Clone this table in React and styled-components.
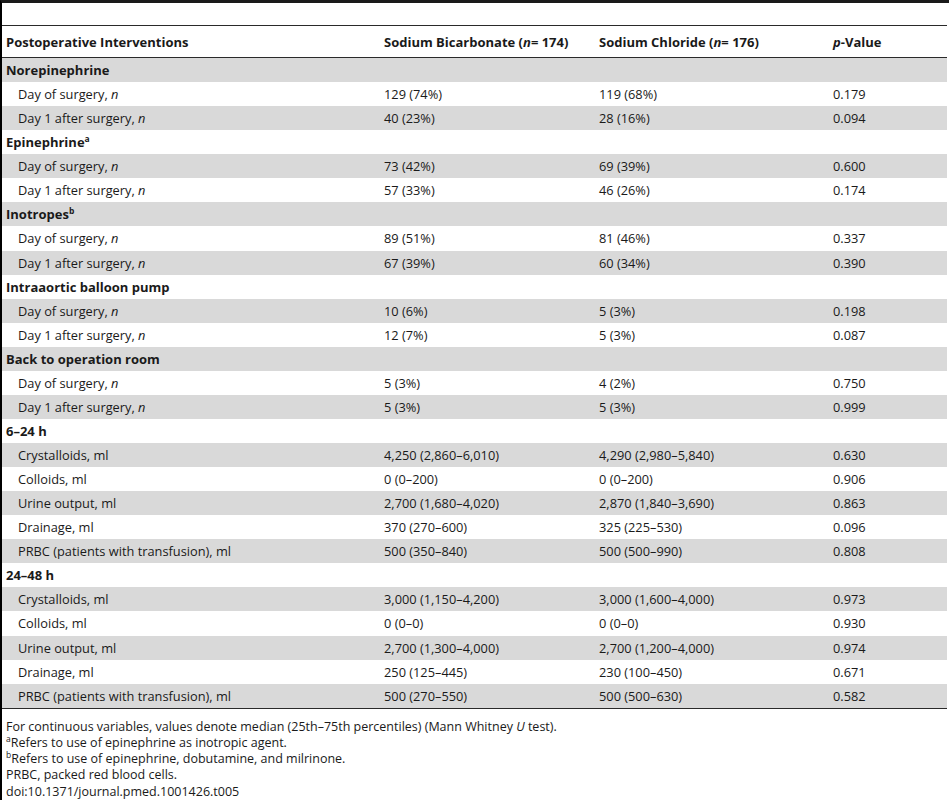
import React from "react";
import styled, { createGlobalStyle } from "styled-components";

const Global = createGlobalStyle`
  html, body { margin: 0; padding: 0; background: #fff; }
  body { font-family: "Open Sans", "Liberation Sans", sans-serif; color: #1a1a1a; }
`;

const Frame = styled.div`
  border-left: 2px solid #000;
  border-top: 3px solid #1a1a1a;
  min-height: 797px;
  box-sizing: border-box;
  padding-top: 22px;
  font-size: 12.8px;
`;

const Table = styled.div`
  border-top: 1px solid #2a2a2a;
  border-bottom: 1px solid #2a2a2a;
  margin-right: 2px;
`;

const Row = styled.div`
  display: grid;
  grid-template-columns: 378px 215px 234px 1fr;
  align-items: center;
  height: ${(p) => (p.$head ? "31px" : "24.07px")};
  background: ${(p) => (p.$shade ? "#d9d9d9" : "#fff")};
  border-bottom: ${(p) => (p.$head ? "1px solid #2a2a2a" : "none")};
  font-weight: ${(p) => (p.$bold ? 700 : 400)};
  font-size: ${(p) => (p.$bold ? "13px" : "12.8px")};
`;

const Cell = styled.div`
  padding-left: ${(p) => (p.$indent ? "16px" : "4px")};
  white-space: nowrap;
`;

const Sup = styled.span`
  font-size: 8.5px;
  position: relative;
  top: -5px;
  line-height: 0;
`;

const Footer = styled.div`
  padding: 10px 0 0 4px;
  line-height: 16.25px;
  font-size: 12.5px;
`;

const groups = [
  { title: "Norepinephrine", rows: [["Day of surgery", "129 (74%)", "119 (68%)", "0.179"], ["Day 1 after surgery", "40 (23%)", "28 (16%)", "0.094"]] },
  { title: "Epinephrine", sup: "a", rows: [["Day of surgery", "73 (42%)", "69 (39%)", "0.600"], ["Day 1 after surgery", "57 (33%)", "46 (26%)", "0.174"]] },
  { title: "Inotropes", sup: "b", rows: [["Day of surgery", "89 (51%)", "81 (46%)", "0.337"], ["Day 1 after surgery", "67 (39%)", "60 (34%)", "0.390"]] },
  { title: "Intraaortic balloon pump", rows: [["Day of surgery", "10 (6%)", "5 (3%)", "0.198"], ["Day 1 after surgery", "12 (7%)", "5 (3%)", "0.087"]] },
  { title: "Back to operation room", rows: [["Day of surgery", "5 (3%)", "4 (2%)", "0.750"], ["Day 1 after surgery", "5 (3%)", "5 (3%)", "0.999"]] },
  { title: "6–24 h", ml: true, rows: [
    ["Crystalloids, ml", "4,250 (2,860–6,010)", "4,290 (2,980–5,840)", "0.630"],
    ["Colloids, ml", "0 (0–200)", "0 (0–200)", "0.906"],
    ["Urine output, ml", "2,700 (1,680–4,020)", "2,870 (1,840–3,690)", "0.863"],
    ["Drainage, ml", "370 (270–600)", "325 (225–530)", "0.096"],
    ["PRBC (patients with transfusion), ml", "500 (350–840)", "500 (500–990)", "0.808"],
  ] },
  { title: "24–48 h", ml: true, rows: [
    ["Crystalloids, ml", "3,000 (1,150–4,200)", "3,000 (1,600–4,000)", "0.973"],
    ["Colloids, ml", "0 (0–0)", "0 (0–0)", "0.930"],
    ["Urine output, ml", "2,700 (1,300–4,000)", "2,700 (1,200–4,000)", "0.974"],
    ["Drainage, ml", "250 (125–445)", "230 (100–450)", "0.671"],
    ["PRBC (patients with transfusion), ml", "500 (270–550)", "500 (500–630)", "0.582"],
  ] },
];

export default function App() {
  let idx = 0;
  const body = [];
  groups.forEach((g) => {
    const shade = idx % 2 === 0;
    idx++;
    body.push(
      <Row key={g.title} $bold $shade={shade}>
        <Cell>
          {g.title}
          {g.sup && <Sup>{g.sup}</Sup>}
        </Cell>
        <Cell />
        <Cell />
        <Cell />
      </Row>
    );
    g.rows.forEach((r, i) => {
      const s = idx % 2 === 0;
      idx++;
      body.push(
        <Row key={g.title + i} $shade={s}>
          <Cell $indent>
            {g.ml ? r[0] : (<>{r[0]}, <i>n</i></>)}
          </Cell>
          <Cell>{r[1]}</Cell>
          <Cell>{r[2]}</Cell>
          <Cell>{r[3]}</Cell>
        </Row>
      );
    });
  });

  return (
    <>
      <Global />
      <Frame>
        <Table>
          <Row $head $bold>
            <Cell>Postoperative Interventions</Cell>
            <Cell>Sodium Bicarbonate (<i>n</i>= 174)</Cell>
            <Cell>Sodium Chloride (<i>n</i>= 176)</Cell>
            <Cell><i>p</i>-Value</Cell>
          </Row>
          {body}
        </Table>
        <Footer>
          <div>For continuous variables, values denote median (25th–75th percentiles) (Mann Whitney <i>U</i> test).</div>
          <div><Sup>a</Sup>Refers to use of epinephrine as inotropic agent.</div>
          <div><Sup>b</Sup>Refers to use of epinephrine, dobutamine, and milrinone.</div>
          <div>PRBC, packed red blood cells.</div>
          <div>doi:10.1371/journal.pmed.1001426.t005</div>
        </Footer>
      </Frame>
    </>
  );
}
